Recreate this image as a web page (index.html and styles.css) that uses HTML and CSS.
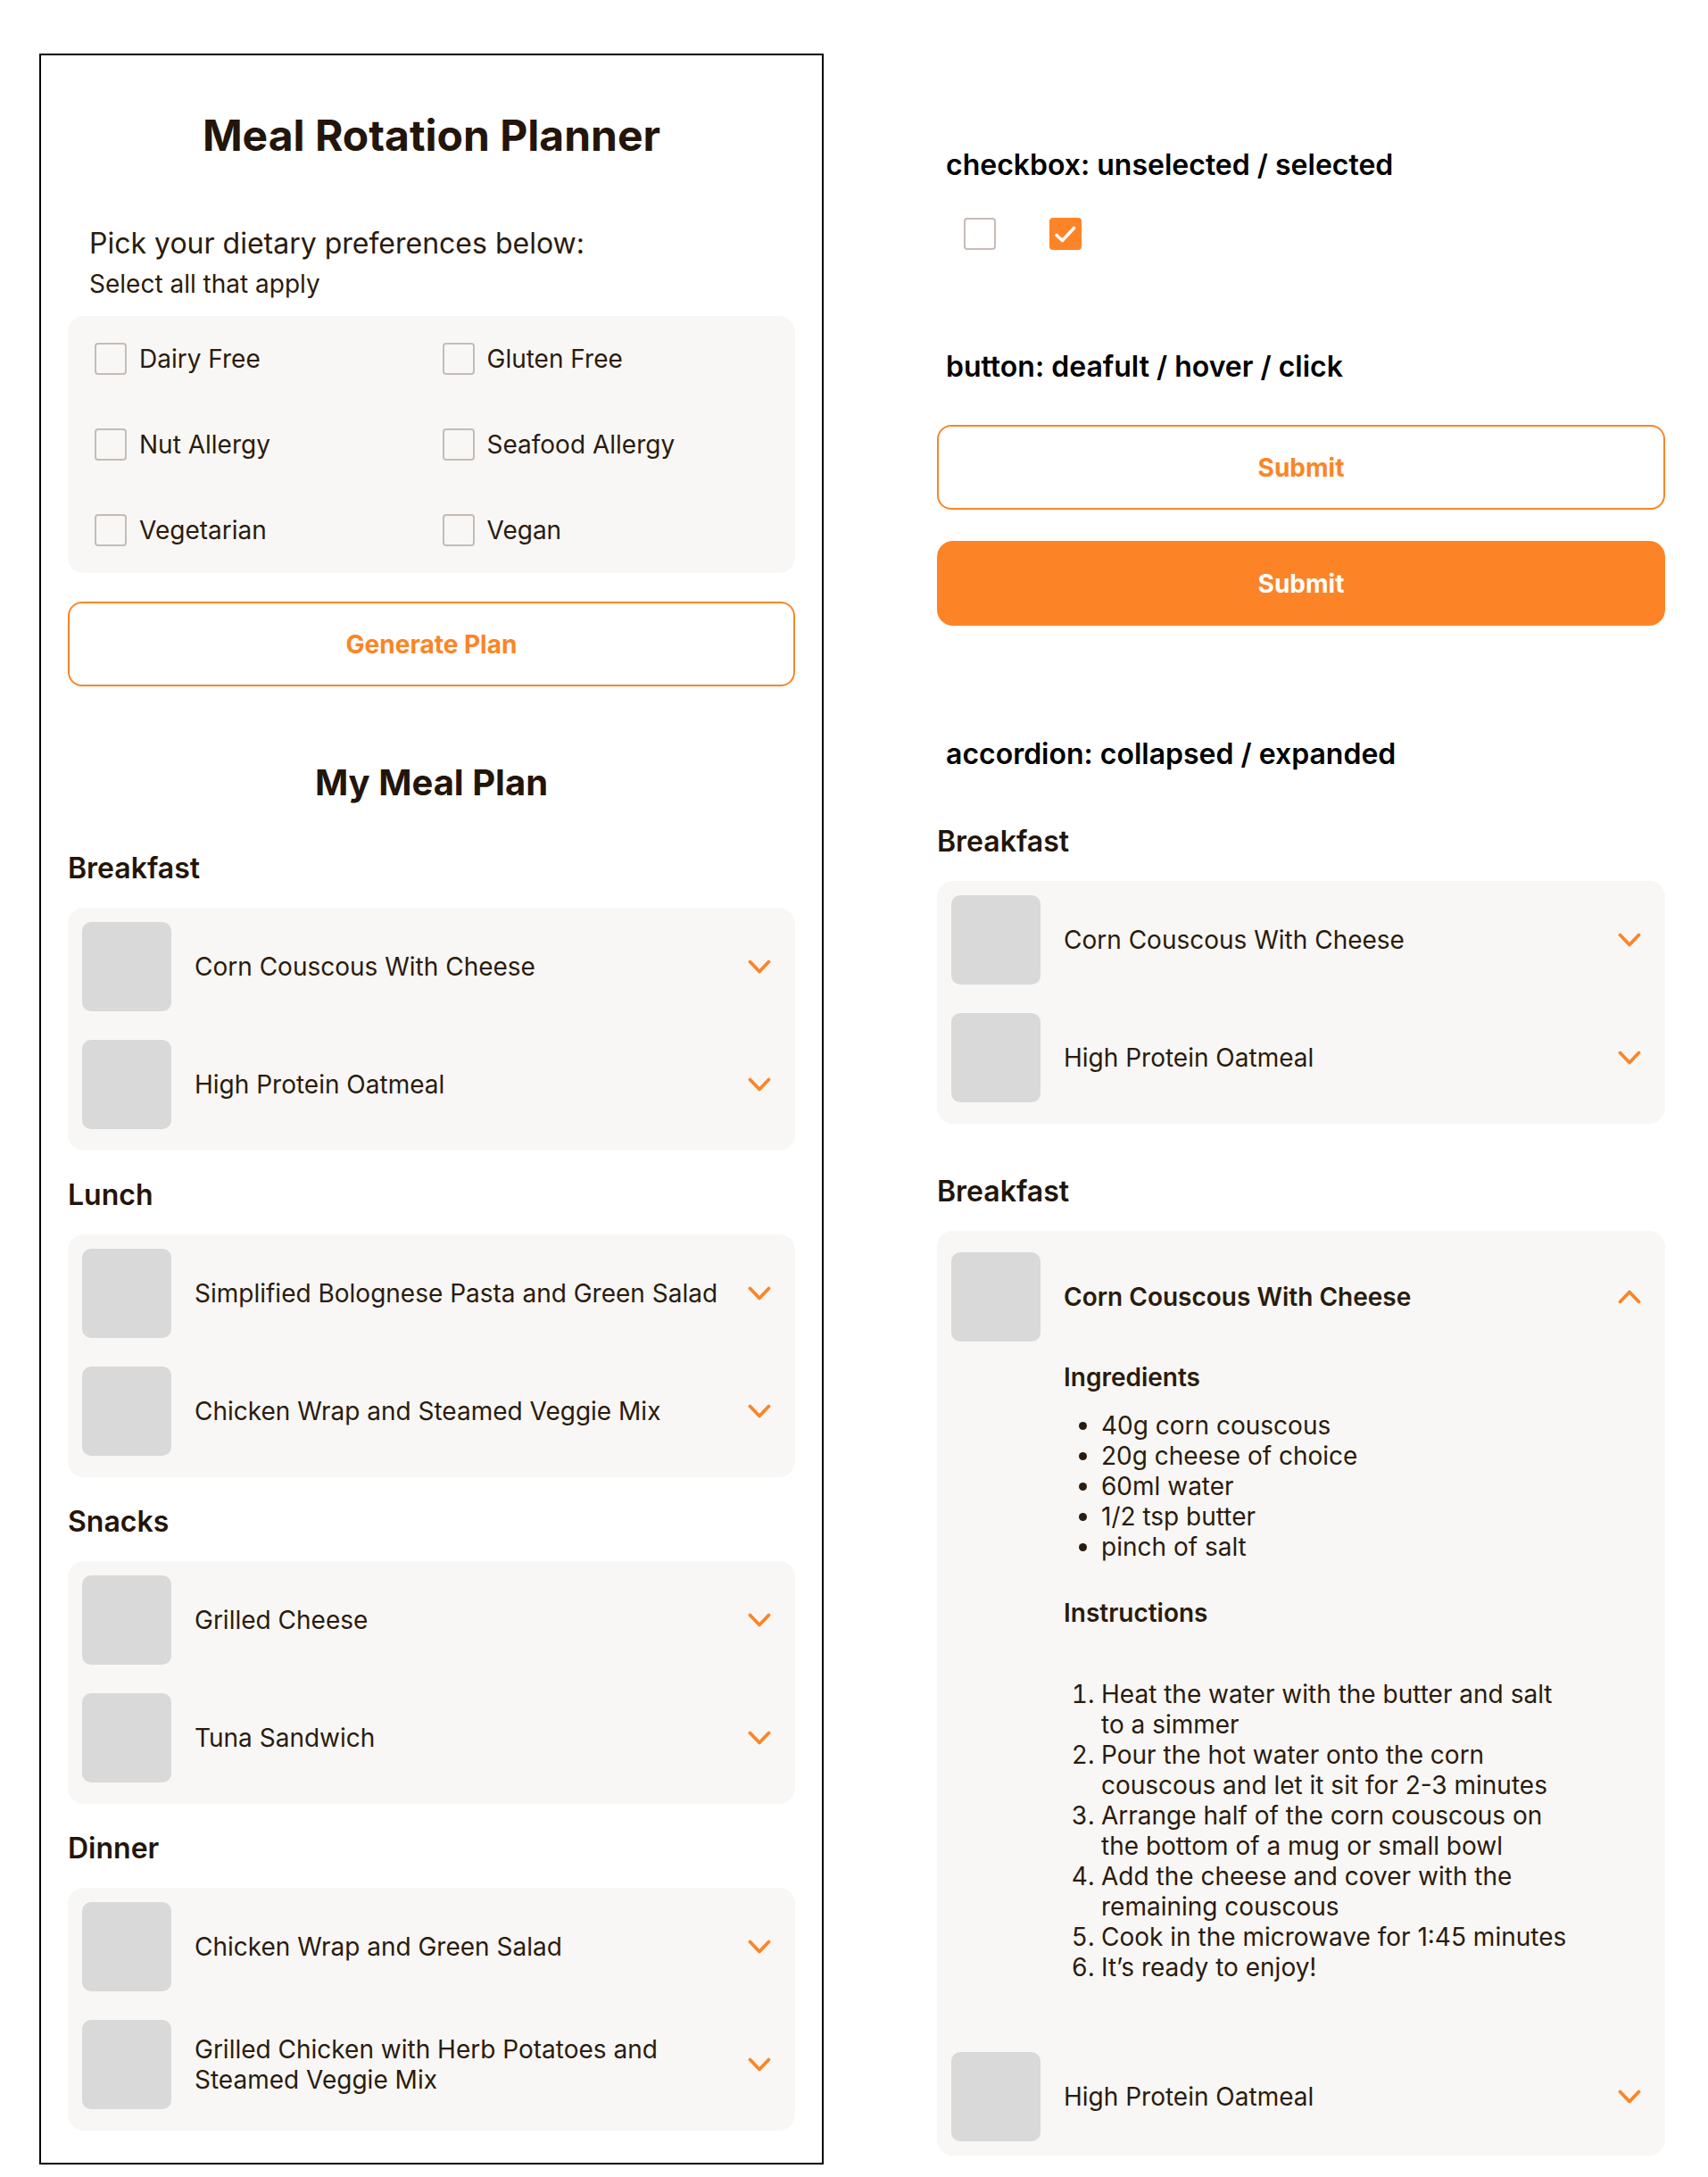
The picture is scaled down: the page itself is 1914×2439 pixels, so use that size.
FILE: index.html
```html
<!DOCTYPE html>
<html lang="en">
<head>
<meta charset="utf-8">
<title>Meal Rotation Planner</title>
<link rel="stylesheet" href="styles.css">
</head>
<body>
<div class="page">
  <main class="panel">
    <h1 class="title">Meal Rotation Planner</h1>
    <p class="lead">Pick your dietary preferences below:</p>
    <p class="sub">Select all that apply</p>
    <div class="prefs">
      <label class="pref"><span class="box"></span><span>Dairy Free</span></label>
      <label class="pref"><span class="box"></span><span>Gluten Free</span></label>
      <label class="pref"><span class="box"></span><span>Nut Allergy</span></label>
      <label class="pref"><span class="box"></span><span>Seafood Allergy</span></label>
      <label class="pref"><span class="box"></span><span>Vegetarian</span></label>
      <label class="pref"><span class="box"></span><span>Vegan</span></label>
    </div>
    <button class="btn btn-outline">Generate Plan</button>

    <h2 class="plan-title">My Meal Plan</h2>

    <section class="meal">
      <h3 class="meal-title">Breakfast</h3>
      <div class="card">
        <div class="row"><div class="thumb"></div><div class="name">Corn Couscous With Cheese</div><svg class="chev" viewBox="0 0 26 16"><path d="M2.5 2.5 L13 13.5 L23.5 2.5"/></svg></div>
        <div class="row"><div class="thumb"></div><div class="name">High Protein Oatmeal</div><svg class="chev" viewBox="0 0 26 16"><path d="M2.5 2.5 L13 13.5 L23.5 2.5"/></svg></div>
      </div>
    </section>
    <section class="meal">
      <h3 class="meal-title">Lunch</h3>
      <div class="card">
        <div class="row"><div class="thumb"></div><div class="name">Simplified Bolognese Pasta and Green Salad</div><svg class="chev" viewBox="0 0 26 16"><path d="M2.5 2.5 L13 13.5 L23.5 2.5"/></svg></div>
        <div class="row"><div class="thumb"></div><div class="name">Chicken Wrap and Steamed Veggie Mix</div><svg class="chev" viewBox="0 0 26 16"><path d="M2.5 2.5 L13 13.5 L23.5 2.5"/></svg></div>
      </div>
    </section>
    <section class="meal">
      <h3 class="meal-title">Snacks</h3>
      <div class="card">
        <div class="row"><div class="thumb"></div><div class="name">Grilled Cheese</div><svg class="chev" viewBox="0 0 26 16"><path d="M2.5 2.5 L13 13.5 L23.5 2.5"/></svg></div>
        <div class="row"><div class="thumb"></div><div class="name">Tuna Sandwich</div><svg class="chev" viewBox="0 0 26 16"><path d="M2.5 2.5 L13 13.5 L23.5 2.5"/></svg></div>
      </div>
    </section>
    <section class="meal">
      <h3 class="meal-title">Dinner</h3>
      <div class="card">
        <div class="row"><div class="thumb"></div><div class="name">Chicken Wrap and Green Salad</div><svg class="chev" viewBox="0 0 26 16"><path d="M2.5 2.5 L13 13.5 L23.5 2.5"/></svg></div>
        <div class="row"><div class="thumb"></div><div class="name">Grilled Chicken with Herb Potatoes and Steamed Veggie Mix</div><svg class="chev" viewBox="0 0 26 16"><path d="M2.5 2.5 L13 13.5 L23.5 2.5"/></svg></div>
      </div>
    </section>
  </main>

  <aside class="specs">
    <h4 class="note">checkbox: unselected / selected</h4>
    <div class="check-demo">
      <span class="box box-white"></span>
      <span class="box box-on"><svg viewBox="0 0 36 36"><path d="M8 19.5 L14.5 25.5 L27.5 11.5"/></svg></span>
    </div>

    <h4 class="note note-btn">button: deafult / hover / click</h4>
    <button class="btn btn-outline btn-submit">Submit</button>
    <button class="btn btn-fill">Submit</button>

    <h4 class="note note-acc">accordion: collapsed / expanded</h4>
    <h3 class="meal-title spec-meal">Breakfast</h3>
    <div class="card">
      <div class="row"><div class="thumb"></div><div class="name">Corn Couscous With Cheese</div><svg class="chev" viewBox="0 0 26 16"><path d="M2.5 2.5 L13 13.5 L23.5 2.5"/></svg></div>
      <div class="row"><div class="thumb"></div><div class="name">High Protein Oatmeal</div><svg class="chev" viewBox="0 0 26 16"><path d="M2.5 2.5 L13 13.5 L23.5 2.5"/></svg></div>
    </div>

    <h3 class="meal-title spec-meal spec-meal-2">Breakfast</h3>
    <div class="card card-open">
      <div class="row"><div class="thumb"></div><div class="name name-open">Corn Couscous With Cheese</div><svg class="chev" viewBox="0 0 26 16"><path d="M2.5 13.5 L13 2.5 L23.5 13.5"/></svg></div>
      <div class="details">
        <h5 class="detail-title">Ingredients</h5>
        <ul class="ingredients">
          <li>40g corn couscous</li>
          <li>20g cheese of choice</li>
          <li>60ml water</li>
          <li>1/2 tsp butter</li>
          <li>pinch of salt</li>
        </ul>
        <h5 class="detail-title detail-title-2">Instructions</h5>
        <ol class="steps">
          <li>Heat the water with the butter and salt to a simmer</li>
          <li>Pour the hot water onto the corn couscous and let it sit for 2-3 minutes</li>
          <li>Arrange half of the corn couscous on the bottom of a mug or small bowl</li>
          <li>Add the cheese and cover with the remaining couscous</li>
          <li>Cook in the microwave for 1:45 minutes</li>
          <li>It’s ready to enjoy!</li>
        </ol>
      </div>
      <div class="row"><div class="thumb"></div><div class="name">High Protein Oatmeal</div><svg class="chev" viewBox="0 0 26 16"><path d="M2.5 2.5 L13 13.5 L23.5 2.5"/></svg></div>
    </div>
  </aside>
</div>
</body>
</html>
```
FILE: styles.css
```css
* { box-sizing: border-box; }

html, body {
  margin: 0;
  padding: 0;
  background: #ffffff;
}

body {
  font-family: Inter, "Noto Sans", "Liberation Sans", sans-serif;
  color: #2b1b0e;
}

.page {
  display: flex;
  align-items: flex-start;
  width: 1914px;
  min-height: 2439px;
}

/* ---------- left panel ---------- */
.panel {
  margin: 60px 0 0 44px;
  width: 879px;
  border: 2px solid #000;
  padding: 62px 30px 36px 30px;
  display: flex;
  flex-direction: column;
}

.title {
  margin: 0;
  font-size: 48px;
  line-height: 56px;
  font-weight: 700;
  text-align: center;
  color: #23150a;
}

.lead {
  margin: 75px 0 0 24px;
  font-size: 32px;
  line-height: 36px;
}

.sub {
  margin: 13px 0 0 24px;
  font-size: 28px;
  line-height: 29px;
}

.prefs {
  margin-top: 21px;
  background: #f8f7f5;
  border-radius: 18px;
  padding: 30px;
  display: grid;
  grid-template-columns: 1fr 1fr;
  column-gap: 24px;
  row-gap: 60px;
}

.pref {
  display: flex;
  align-items: center;
  gap: 14px;
  font-size: 28px;
  line-height: 36px;
}

.box {
  width: 36px;
  height: 36px;
  flex: none;
  border: 2px solid #c6bcb6;
  border-radius: 4px;
  display: inline-block;
}

.btn {
  display: block;
  width: 100%;
  height: 95px;
  border-radius: 16px;
  font-family: inherit;
  font-size: 28px;
  font-weight: 700;
  cursor: pointer;
}

.btn-outline {
  margin-top: 32px;
  background: #fff;
  border: 2px solid #fb8526;
  color: #fb8526;
}

.btn-fill {
  margin-top: 35px;
  background: #fc8427;
  border: none;
  border-radius: 18px;
  color: #fff;
}

.plan-title {
  margin: 84px 0 0 0;
  font-size: 40px;
  line-height: 48px;
  font-weight: 700;
  text-align: center;
  color: #23150a;
}

.meal { margin-top: 32px; }
.meal:first-of-type { margin-top: 54px; }

.meal-title {
  margin: 0 0 26px 0;
  font-size: 32px;
  line-height: 36px;
  font-weight: 600;
  color: #23150a;
}

.card {
  background: #f8f7f5;
  border-radius: 18px;
  padding: 16px 27px 24px 16px;
  display: flex;
  flex-direction: column;
  gap: 32px;
}

.row {
  display: flex;
  align-items: center;
  min-height: 100px;
}

.thumb {
  width: 100px;
  height: 100px;
  flex: none;
  background: #d9d9d9;
  border-radius: 10px;
}

.name {
  flex: 1;
  margin: 0 24px 0 26px;
  font-size: 28px;
  line-height: 34px;
}

.chev {
  width: 26px;
  height: 16px;
  flex: none;
}

.chev path {
  fill: none;
  stroke: #fb8526;
  stroke-width: 3.8;
  stroke-linecap: round;
  stroke-linejoin: round;
}

/* ---------- right column ---------- */
.specs {
  margin-left: 127px;
  width: 816px;
  padding-top: 167px;
  display: flex;
  flex-direction: column;
}

.note {
  margin: 0 0 0 10px;
  font-size: 32px;
  line-height: 36px;
  font-weight: 600;
  color: #000;
}

.check-demo {
  margin-top: 41px;
  padding-left: 30px;
  display: flex;
  gap: 60px;
}

.box-white { background: #fff; }

.box-on {
  border: none;
  background: #fc8427;
  position: relative;
}

.box-on svg {
  width: 36px;
  height: 36px;
  display: block;
}

.box-on path {
  fill: none;
  stroke: #fff;
  stroke-width: 3.6;
  stroke-linecap: round;
  stroke-linejoin: round;
}

.note-btn { margin-top: 113px; }

.btn-submit { margin-top: 47px; }

.note-acc { margin-top: 126px; }

.spec-meal { margin-top: 62px; }

.spec-meal-2 { margin-top: 58px; }

.card-open {
  padding-top: 24px;
  padding-bottom: 16px;
  gap: 0;
}

.name-open { font-weight: 600; }

.details {
  margin: 23px 0 78px 126px;
  width: 578px;
}

.detail-title {
  margin: 0;
  font-size: 28px;
  line-height: 34px;
  font-weight: 600;
}

.detail-title-2 { margin-top: 40px; }

.ingredients,
.steps {
  margin: 20px 0 0 0;
  padding-left: 42px;
  font-size: 28px;
  line-height: 34px;
}

.steps { margin-top: 57px; }
```
